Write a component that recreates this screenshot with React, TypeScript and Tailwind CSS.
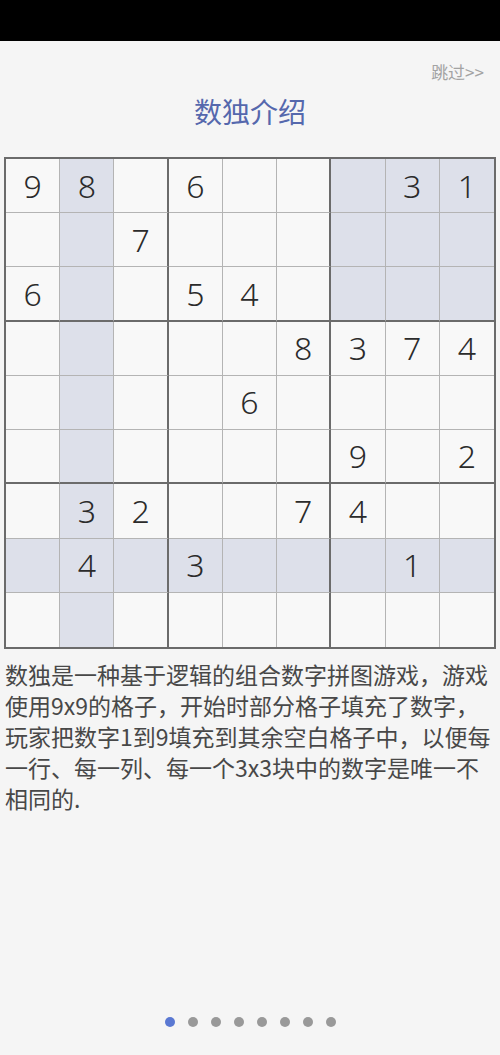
import React from "react";

const board: (number | null)[][] = [
  [9, 8, null, 6, null, null, null, 3, 1],
  [null, null, 7, null, null, null, null, null, null],
  [6, null, null, 5, 4, null, null, null, null],
  [null, null, null, null, null, 8, 3, 7, 4],
  [null, null, null, null, 6, null, null, null, null],
  [null, null, null, null, null, null, 9, null, 2],
  [null, 3, 2, null, null, 7, 4, null, null],
  [null, 4, null, 3, null, null, null, 1, null],
  [null, null, null, null, null, null, null, null, null],
];

const intro = [
  "数独是一种基于逻辑的组合数字拼图游戏，游戏",
  "使用9x9的格子，开始时部分格子填充了数字，",
  "玩家把数字1到9填充到其余空白格子中，以便每",
  "一行、每一列、每一个3x3块中的数字是唯一不",
  "相同的.",
];

// 选中的格子：第2列、第8行、右上角的宫
const isHighlighted = (r: number, c: number) =>
  c === 1 || r === 7 || (r < 3 && c > 5);

function Cell({ r, c, value }: { r: number; c: number; value: number | null }) {
  const right =
    c === 8 ? "" : c === 2 || c === 5 ? "border-r-2 border-r-[#6b6b6b]" : "border-r border-r-[#b4b4b4]";
  const bottom =
    r === 8 ? "" : r === 2 || r === 5 ? "border-b-2 border-b-[#6b6b6b]" : "border-b border-b-[#b4b4b4]";
  return (
    <div
      className={`flex items-center justify-center text-[32px] font-light text-[#2b2b2b] ${right} ${bottom} ${
        isHighlighted(r, c) ? "bg-[#dde0ea]" : "bg-[#f8f8f8]"
      }`}
    >
      {value ?? ""}
    </div>
  );
}

export default function App() {
  return (
    <div className="w-[500px] h-[1055px] bg-[#f5f5f5] flex flex-col" style={{ fontFamily: '"Noto Sans", "Noto Sans CJK SC", sans-serif' }}>
      <div className="h-[41px] bg-black shrink-0" />

      <div className="mt-[20px] h-[22px] flex justify-end pr-[16px] text-[17px] leading-[22px] text-[#a3a3a3] font-['Noto_Sans_CJK_SC',sans-serif]">
        跳过&gt;&gt;
      </div>

      <h1 className="mt-[10px] text-center text-[28px] leading-[36px] text-[#5568ad] font-['Noto_Sans_CJK_SC',sans-serif]">
        数独介绍
      </h1>

      <div className="mt-[28px] mx-auto w-[492px] h-[492px] border-2 border-[#6b6b6b] grid grid-cols-9 grid-rows-9">
        {board.map((row, r) =>
          row.map((v, c) => <Cell key={`${r}-${c}`} r={r} c={c} value={v} />)
        )}
      </div>

      <div className="mt-[10px] px-[5px] text-[23px] leading-[31px] text-[#484848] font-['Noto_Sans_CJK_SC',sans-serif]">
        {intro.map((line) => (
          <p key={line} className="whitespace-nowrap">{line}</p>
        ))}
      </div>

      <div className="mt-auto mb-[28px] flex justify-center gap-[13px]">
        {Array.from({ length: 8 }).map((_, i) => (
          <span
            key={i}
            className={`w-[10px] h-[10px] rounded-full ${i === 0 ? "bg-[#5a78d2]" : "bg-[#999999]"}`}
          />
        ))}
      </div>
    </div>
  );
}
